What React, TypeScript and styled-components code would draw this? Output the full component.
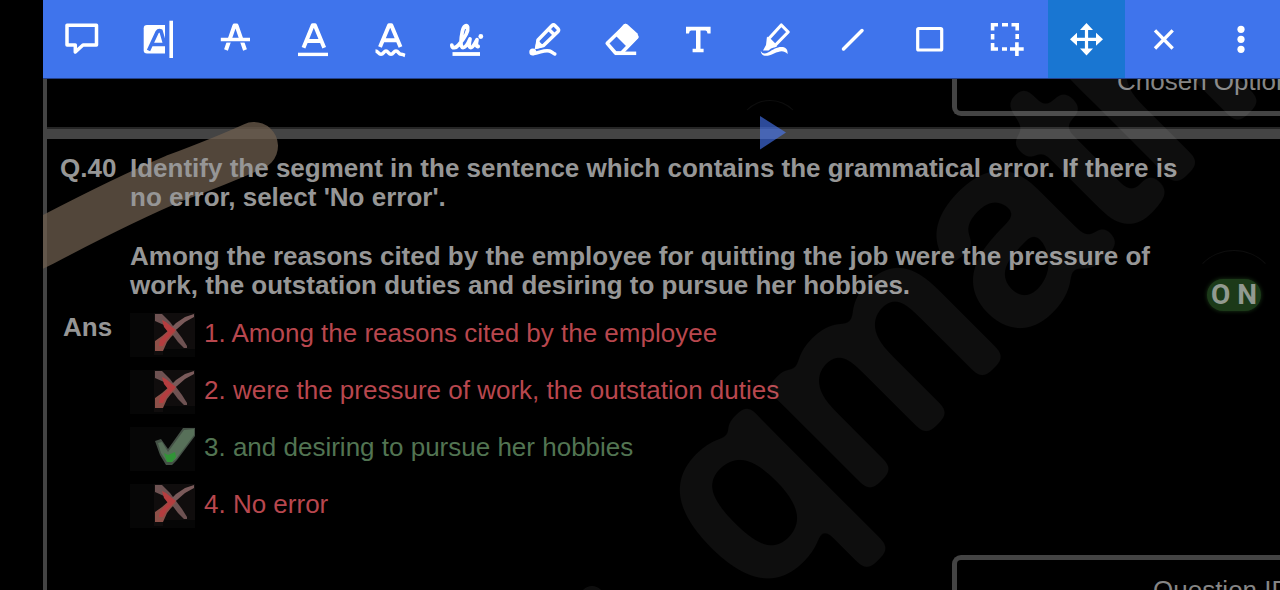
import React from 'react';
import styled, { createGlobalStyle } from 'styled-components';

const BLUE = '#3f74ec';
const RULE = '#444444';

const GlobalStyle = createGlobalStyle`
  * { box-sizing: border-box; }
  body { margin: 0; background: #000; }
`;

const Shell = styled.div`
  position: relative;
  height: 100vh;
  padding-left: 43px;
  overflow: hidden;
  display: flex;
  flex-direction: column;
  background: #000;
  color: #969696;
  font-family: 'Liberation Sans', Arial, sans-serif;
  font-size: 26px;
  line-height: 29px;
`;

const Toolbar = styled.header`
  position: relative;
  z-index: 3;
  display: flex;
  flex: none;
  height: 79px;
  background: ${BLUE};
  border-bottom: 1px solid #24418a;
`;

const ToolButton = styled.button<{ $active?: boolean }>`
  flex: 1;
  display: flex;
  align-items: center;
  justify-content: center;
  padding: 0;
  border: 0;
  background: ${(p) => (p.$active ? '#1976d2' : 'transparent')};
  cursor: pointer;
`;

const ToolIcon = styled.svg`
  width: 40px;
  height: 40px;
  fill: none;
  stroke: #fff;
  stroke-width: 3.5;
  overflow: visible;
`;

const Sheet = styled.main`
  flex: 1;
  display: flex;
  flex-direction: column;
  border-left: 4px solid ${RULE};
`;

const PreviousQuestion = styled.section`
  height: 48px;
  flex: none;
  overflow: hidden;
  display: flex;
  justify-content: flex-end;
  align-items: flex-start;
`;

const Divider = styled.hr`
  width: 100%;
  height: 12px;
  flex: none;
  margin: 0;
  border: 0;
  border-top: 2px solid #262626;
  background: ${RULE};
`;

const MetaBox = styled.div<{ $edge: 'top' | 'bottom' }>`
  width: 328px;
  height: ${(p) => (p.$edge === 'top' ? '120px' : '37px')};
  flex: none;
  display: flex;
  align-items: ${(p) => (p.$edge === 'top' ? 'flex-start' : 'flex-end')};
  padding: ${(p) => (p.$edge === 'top' ? '16px 0 0 196px' : '0 0 15px 160px')};
  border: 0 solid ${RULE};
  border-left-width: 5px;
  border-${(p) => p.$edge}-width: 5px;
  border-${(p) => p.$edge}-left-radius: 9px;
  color: #858585;
  white-space: nowrap;
`;

const Question = styled.section`
  position: relative;
  z-index: 1;
  display: grid;
  grid-template-columns: 70px 1fr;
  row-gap: 13px;
  padding: 15px 80px 27px 13px;
`;

const Label = styled.div`
  font-weight: bold;
`;

const AnswerLabel = styled(Label)`
  padding-left: 3px;
`;

const Prompt = styled.div`
  font-weight: bold;

  p { margin: 0 0 30px; }
  p:last-child { margin-bottom: 0; }
`;

const Options = styled.ul`
  margin: 0;
  padding: 0;
  list-style: none;
  display: flex;
  flex-direction: column;
  gap: 13px;
`;

const Option = styled.li<{ $correct?: boolean }>`
  display: flex;
  gap: 9px;
  height: 44px;
  line-height: 40px;
  color: ${(p) => (p.$correct ? '#527452' : '#b8474e')};
`;

const Mark = styled.svg`
  width: 65px;
  height: 44px;
  background: #060606;
`;

const BoxRow = styled.div`
  display: flex;
  justify-content: flex-end;
`;

const Ink = styled.svg`
  position: absolute;
  top: 0;
  left: 43px;
  width: 300px;
  height: 300px;
  pointer-events: none;
`;

const Watermark = styled.svg`
  position: absolute;
  top: 0;
  right: 0;
  width: 720px;
  height: 590px;
  z-index: 2;
  pointer-events: none;
  opacity: 0.055;
`;

const Floating = styled.button<{ $size: number; $top: number; $right: number }>`
  position: absolute;
  z-index: 2;
  top: ${(p) => p.$top}px;
  right: ${(p) => p.$right}px;
  width: ${(p) => p.$size}px;
  height: ${(p) => p.$size}px;
  display: flex;
  align-items: center;
  justify-content: center;
  padding: 0;
  border: 1px solid transparent;
  border-top-color: #0e0e0e;
  border-radius: 50%;
  background: transparent;
`;

const PlayGlyph = styled.svg`
  width: 34px;
  height: 34px;
  fill: #4a7cff;
  opacity: 0.6;
`;

const OnPill = styled.span`
  width: 54px;
  height: 32px;
  flex: none;
  display: flex;
  align-items: center;
  justify-content: center;
  border-radius: 16px;
  background: #1c3a19;
  box-shadow: 0 0 4px #1c3a19;
  color: #929a91;
  font: bold 28px/32px Roboto, sans-serif;
  white-space: nowrap;
`;

const tools: { name: string; active?: boolean; art: React.ReactNode }[] = [
  { name: 'Comment', art: <path strokeLinejoin="round" d="M5 6.3H34.5V26H21L13.3 33V26H5Z" /> },
  {
    name: 'Select text',
    art: (
      <>
        <path fill="#fff" stroke="none" d="M8 6H26V34.5H8a3.3 3.3 0 0 1-3.3-3.3V9.3A3.3 3.3 0 0 1 8 6Z" />
        <path stroke={BLUE} strokeWidth="3.6" d="M9.5 31.5 18.2 13Q19.5 11 22 12L26 26M13 25.5H26" />
        <path strokeWidth="3.6" d="M32.2 1.7V39" />
      </>
    ),
  },
  {
    name: 'Strikethrough',
    art: (
      <>
        <path strokeWidth="4" strokeLinejoin="round" d="M10 31 18.4 6.6H20.6L29 31" />
        <path stroke={BLUE} strokeWidth="4.600" d="M5 21.300H34" />
        <path strokeWidth="3.5" d="M4.800 20.500H34" />
      </>
    ),
  },
  {
    name: 'Underline',
    art: (
      <>
        <path strokeWidth="4" strokeLinejoin="round" d="M9.500 28.800 18.700 6.300H20.900L30.200 28.800M13.500 22H26.500" />
        <path strokeWidth="3.4" d="M4 35.4H34" />
      </>
    ),
  },
  {
    name: 'Squiggly underline',
    art: (
      <>
        <path strokeWidth="4" strokeLinejoin="round" d="M9 28 18.100 6.300H20.300L29.500 28M13 21.200H26" />
        <path d="M4.500 32C7 32 7.500 35.300 10 35.300S12.800 32 15 32 17.500 35.300 20 35.300 22.500 32 25 32 27.500 35.300 30 35.300 32 36 34 36.500" />
      </>
    ),
  },
  {
    name: 'Signature',
    art: (
      <>
        <path
          strokeLinecap="round"
          strokeLinejoin="round"
          strokeWidth="3.700"
          d="M3.800 26c.3 3.800 3.900 3.600 7.200-.5 5-6 9.500-13.500 8.700-17.200-.8-3.200-4.200-1.400-5.400 4.400C12.800 20 12 28.600 15 28.600c3 0 5-4 7-8.600-1 4.500-1.300 8.600.8 8.600 2.300 0 4-4.200 6.200-8-.6 3-1.500 7.800 1.200 6.800"
        />
        <circle cx="32.800" cy="17.500" r="2.400" fill="#fff" stroke="none" />
        <path strokeWidth="3.800" d="M4.500 35H32" />
      </>
    ),
  },
  {
    name: 'Pen',
    art: (
      <>
        <path
          strokeLinejoin="round"
          d="M11 28 12 21 25.800 6.700a2.400 2.400 0 0 1 3.300 0l2.700 2.700a2.400 2.400 0 0 1 0 3.300L17.500 26.500Z M23 10.500 28.500 16"
        />
        <path fill="#fff" stroke="none" d="M8.500 30.500 11 20.500 18.500 27.500Z" />
        <circle cx="6.800" cy="33" r="3.500" fill="#fff" stroke="none" />
        <path strokeLinecap="round" d="M7 34.500C14 34 18 30.500 23.500 32 26 32.800 27 34.500 28.800 35" />
      </>
    ),
  },
  {
    name: 'Eraser',
    art: (
      <>
        <path strokeLinejoin="round" d="M22.500 6.500 4.200 24.300 12.500 34H18.500L34 18Z" />
        <path fill="#fff" stroke="none" d="M12 16 20.500 5.500Q22.500 3.800 24.500 5.500L34.500 14.500Q36 17 34.500 19.500L25 29Z" />
        <path d="M12 34.300H33.200" />
      </>
    ),
  },
  {
    name: 'Text',
    art: (
      <path
        fill="#fff"
        stroke="none"
        d="M6 7.700H30.600V14.500H27.500Q27.200 11.500 25.500 11.500H20.500V29.700H23.600V33.300H12.600V29.700H16V11.500H11Q9.300 11.500 9 14.500H6Z"
      />
    ),
  },
  {
    name: 'Highlighter',
    art: (
      <>
        <path strokeLinejoin="round" strokeWidth="3.200" d="M24.300 6 31.200 13 18 26.500 11.500 20Z" />
        <path fill="#fff" stroke="none" d="M10 17.500 20 27.500 14 29.500 11.500 31.500H6L9 26Z" />
        <path fill="#fff" stroke="none" d="M3.700 32Q6 36 11 33.500C17 30 20 27.500 26 28Q31 29 30.600 35C27 31 23 31.500 17 34.500 10 38 4.500 38 3.700 32Z" />
      </>
    ),
  },
  { name: 'Line', art: <path strokeLinecap="round" d="M8.500 30 27 11.500" /> },
  { name: 'Rectangle', art: <rect x="5.700" y="9.500" width="24" height="21.500" rx="1" strokeWidth="3.200" /> },
  {
    name: 'Area select',
    art: (
      <>
        <path
          strokeWidth="3.600"
          d="M3.600 11.500V5.800H9M13 5.800H19M22.500 5.800H28.200V11.500M28.200 15V20M3.600 15V20.500M3.600 24V30H9M13 30H18"
        />
        <path strokeWidth="3.600" d="M21 30H34.700M27.900 23.300V37" />
      </>
    ),
  },
  {
    name: 'Move',
    active: true,
    art: (
      <>
        <path d="M6 20.300H33M19.500 7V34" strokeWidth="3.200" />
        <path
          fill="#fff"
          stroke="none"
          d="M19.500 4 26 11H13ZM19.500 36.600 26 29.600H13ZM3 20.300 10 13.800V26.800ZM36 20.300 29 13.800V26.800Z"
        />
      </>
    ),
  },
  { name: 'Close', art: <path strokeWidth="3.300" d="M11 11.300 28.700 29.500M28.700 11.300 11 29.500" /> },
  {
    name: 'More',
    art: (
      <g fill="#fff" stroke="none">
        <circle cx="20" cy="10.300" r="3.600" />
        <circle cx="20" cy="20.300" r="3.600" />
        <circle cx="20" cy="30.300" r="3.600" />
      </g>
    ),
  },
];

const CrossMark = () => (
  <Mark viewBox="0 0 65 44" aria-hidden="true">
    <path fill="#100d0d" d="M24 0H65V36H33V42H24Z" />
    <path fill="#6e5252" d="M25 1H32L40 9 46 17 52 25 57 33V35H54L48 29 42 21 34 12 25 8Z" />
    <path fill="#7a5a5a" d="M64 1V4L55 9 47 16 42 20 39 17 46 10 55 4Z" />
    <path fill="#8c5048" d="M40 16 46 19 41 24 37 29 33 38H25V28L32 23Z" />
    <path fill="#b53d3f" d="M32 7 36 9 42 14 46 17 42 21 37 26 33 33H29L30 27 38 19 34 14Z" />
  </Mark>
);

const TickMark = () => (
  <Mark viewBox="0 0 65 44" aria-hidden="true">
    <path fill="#445146" d="M25 14 31 12 38 22 53 1H65V9L47 33 42 38H36L30 28Z" />
    <path fill="#577059" d="M28 16 32 15 38 25 54 3 64 2V8L46 32 42 35H37L31 26Z" />
    <path fill="#319437" d="M34 26 38 28 45 25 46 30 42 35H37Z" />
  </Mark>
);

const options = [
  { text: '1. Among the reasons cited by the employee' },
  { text: '2. were the pressure of work, the outstation duties' },
  { text: '3. and desiring to pursue her hobbies', correct: true },
  { text: '4. No error' },
];

export default function App() {
  return (
    <Shell>
      <GlobalStyle />
      <Toolbar role="toolbar" aria-label="Annotation tools">
        {tools.map((tool) => (
          <ToolButton key={tool.name} type="button" aria-label={tool.name} $active={tool.active}>
            <ToolIcon viewBox="0 0 40 40" aria-hidden="true">{tool.art}</ToolIcon>
          </ToolButton>
        ))}
      </Toolbar>

      <Sheet>
        <PreviousQuestion>
          <MetaBox $edge="bottom">Chosen Option</MetaBox>
        </PreviousQuestion>
        <Divider />
        <Question>
          <Label>Q.40</Label>
          <Prompt>
            <p>
              Identify the segment in the sentence which contains the grammatical error. If there is
              <br />
              no error, select 'No error'.
            </p>
            <p>
              Among the reasons cited by the employee for quitting the job were the pressure of
              <br />
              work, the outstation duties and desiring to pursue her hobbies.
            </p>
          </Prompt>
          <AnswerLabel>Ans</AnswerLabel>
          <Options>
            {options.map((option) => (
              <Option key={option.text} $correct={option.correct}>
                {option.correct ? <TickMark /> : <CrossMark />}
                <span>{option.text}</span>
              </Option>
            ))}
          </Options>
        </Question>
        <BoxRow>
          <MetaBox $edge="top">Question ID</MetaBox>
        </BoxRow>
      </Sheet>

      <Ink viewBox="0 0 300 300" aria-hidden="true">
        <path
          d="M-30 257 0 242Q80 200 132 178 180 160 211 146"
          fill="none"
          stroke="#6d5d4d"
          strokeOpacity="0.75"
          strokeWidth="48"
          strokeLinecap="round"
        />
      </Ink>

      <Watermark viewBox="560 0 720 590" aria-hidden="true">
        <defs>
          <filter id="soften-corners" x="-10%" y="-10%" width="120%" height="120%">
            <feGaussianBlur stdDeviation="6" />
            <feComponentTransfer>
              <feFuncA type="linear" slope="14" intercept="-6.500" />
            </feComponentTransfer>
          </filter>
        </defs>
        <g filter="url(#soften-corners)">
          <text
            transform="translate(755 600) rotate(-45)"
            fill="#fff"
            stroke="#fff"
            strokeWidth="10"
            strokeLinejoin="round"
            fontFamily="Liberation Sans, Arial, sans-serif"
            fontSize="260"
          >
            qmath
          </text>
        </g>
        <circle cx="592" cy="598" r="12" fill="#fff" />
      </Watermark>

      <Floating type="button" aria-label="Play" $size={66} $top={100} $right={477}>
        <PlayGlyph viewBox="0 0 34 34" aria-hidden="true">
          <path d="M7 0 33 16.500 7 33.500Z" />
        </PlayGlyph>
      </Floating>
      <Floating type="button" $size={90} $top={250} $right={1}>
        <OnPill>O N</OnPill>
      </Floating>
    </Shell>
  );
}
